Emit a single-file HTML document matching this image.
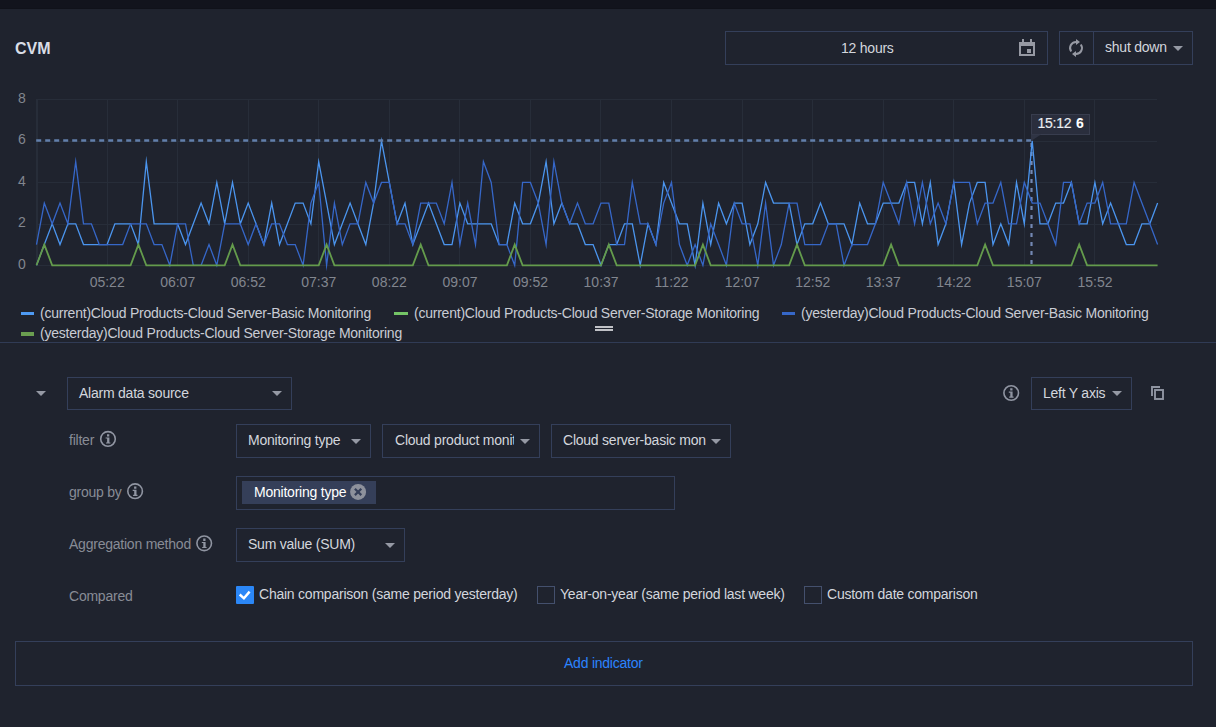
<!DOCTYPE html>
<html><head><meta charset="utf-8"><title>CVM</title>
<style>
*{box-sizing:border-box;margin:0;padding:0}
html,body{width:1216px;height:727px;overflow:hidden;background:#1f232e;font-family:"Liberation Sans",sans-serif;font-size:14px;color:#d3d6dd}
.abs{position:absolute}
#top{left:0;top:0;width:1216px;height:9px;background:#12141d}
#title{left:15px;top:40px;font-size:16px;font-weight:bold;line-height:18px;color:#d9dde6}
.box{position:absolute;border:1px solid #343f5a;background:transparent}
.txt{position:absolute;white-space:nowrap;line-height:16px;letter-spacing:-0.23px}
.yl{position:absolute;left:0;width:25.7px;text-align:right;font-size:14px;line-height:16px;color:#82868f}
.xl{position:absolute;top:274px;width:60px;text-align:center;font-size:14px;line-height:16px;color:#82868f}
.lg{position:absolute;white-space:nowrap;line-height:16px;color:#c9ccd4;font-size:14px;letter-spacing:-0.23px}
.lb{position:absolute;width:13px;height:3px}
.lab{position:absolute;white-space:nowrap;line-height:16px;color:#888c96;font-size:14px;letter-spacing:-0.23px}
.caret{position:absolute;width:0;height:0;border-left:5px solid transparent;border-right:5px solid transparent;border-top:5.5px solid #9599a4}
svg{position:absolute;left:0;top:0;overflow:visible}
</style></head><body>
<div id="top" class="abs"></div><div class="abs" style="left:0;top:8px;width:1216px;height:1px;background:#10121a"></div>
<div id="title" class="abs">CVM</div>

<!-- date box -->
<div class="box" style="left:725px;top:31px;width:323px;height:34px"></div>
<div class="txt" style="left:841px;top:40px">12 hours</div>
<svg width="1216" height="727" viewBox="0 0 1216 727">
 <!-- calendar icon -->
 <g fill="#9699a3">
  <path d="M1019 42h16v14h-16z M1021 46v8h12v-8z" fill-rule="evenodd"/>
  <rect x="1022" y="39" width="2" height="4"/><rect x="1030" y="39" width="2" height="4"/>
  <rect x="1027" y="49" width="4" height="4"/>
 </g>
 <!-- refresh icon -->
 <g fill="none" stroke="#9699a3" stroke-width="2">
  <path d="M1071.2 51.5a6 6 0 0 1 4.8-9.5"/>
  <path d="M1080.8 44.5a6 6 0 0 1 -4.8 9.5"/>
 </g>
 <path d="M1076 39l4 3-4 3z M1076 57l-4-3 4-3z" fill="#9699a3"/>
</svg>
<div class="box" style="left:1059px;top:31px;width:134px;height:34px"></div>
<div class="abs" style="left:1093px;top:31px;width:1px;height:34px;background:#343f5a"></div>
<div class="txt" style="left:1105px;top:39px">shut down</div>
<div class="caret" style="left:1173px;top:46px"></div>

<!-- chart -->
<svg width="1216" height="727" viewBox="0 0 1216 727">
 <g stroke="#272d39" stroke-width="1" shape-rendering="crispEdges"><line x1="36" x2="1157" y1="265.5" y2="265.5"/><line x1="36" x2="1157" y1="224.5" y2="224.5"/><line x1="36" x2="1157" y1="182.5" y2="182.5"/><line x1="36" x2="1157" y1="141.5" y2="141.5"/><line x1="36" x2="1157" y1="99.5" y2="99.5"/><line x1="36.5" x2="36.5" y1="99" y2="266"/><line x1="107.5" x2="107.5" y1="99" y2="266"/><line x1="177.5" x2="177.5" y1="99" y2="266"/><line x1="248.5" x2="248.5" y1="99" y2="266"/><line x1="318.5" x2="318.5" y1="99" y2="266"/><line x1="389.5" x2="389.5" y1="99" y2="266"/><line x1="459.5" x2="459.5" y1="99" y2="266"/><line x1="530.5" x2="530.5" y1="99" y2="266"/><line x1="600.5" x2="600.5" y1="99" y2="266"/><line x1="671.5" x2="671.5" y1="99" y2="266"/><line x1="742.5" x2="742.5" y1="99" y2="266"/><line x1="812.5" x2="812.5" y1="99" y2="266"/><line x1="883.5" x2="883.5" y1="99" y2="266"/><line x1="953.5" x2="953.5" y1="99" y2="266"/><line x1="1024.5" x2="1024.5" y1="99" y2="266"/><line x1="1094.5" x2="1094.5" y1="99" y2="266"/><line x1="37.5" x2="37.5" y1="99" y2="266"/></g>
 <line x1="1031.5" x2="1031.5" y1="143" y2="265" stroke="#7388b3" stroke-width="2.2" stroke-dasharray="4,5"/>
 <polyline fill="none" stroke="#4b95ee" stroke-width="1.3" stroke-linejoin="miter" stroke-miterlimit="10" points="36.5,265.3 44.3,244.6 52.2,223.8 60.0,244.6 67.9,223.8 75.7,223.8 83.5,244.6 91.4,244.6 99.2,244.6 107.1,244.6 114.9,223.8 122.7,223.8 130.6,223.8 138.4,244.6 146.3,161.7 154.1,223.8 161.9,223.8 169.8,223.8 177.6,223.8 185.5,244.6 193.3,223.8 201.1,203.1 209.0,223.8 216.8,182.4 224.7,223.8 232.5,182.4 240.3,223.8 248.2,203.1 256.0,223.8 263.9,244.6 271.7,203.1 279.5,244.6 287.4,223.8 295.2,203.1 303.1,203.1 310.9,223.8 318.7,161.7 326.6,203.1 334.4,244.6 342.3,223.8 350.1,203.1 357.9,223.8 365.8,244.6 373.6,203.1 381.5,140.9 389.3,182.4 397.1,223.8 405.0,203.1 412.8,244.6 420.7,223.8 428.5,203.1 436.3,223.8 444.2,244.6 452.0,244.6 459.9,203.1 467.7,223.8 475.5,223.8 483.4,223.8 491.2,223.8 499.1,244.6 506.9,244.6 514.7,203.1 522.6,223.8 530.4,223.8 538.3,203.1 546.1,161.7 553.9,223.8 561.8,203.1 569.6,223.8 577.5,223.8 585.3,244.6 593.1,244.6 601.0,265.3 608.8,244.6 616.7,244.6 624.5,223.8 632.3,223.8 640.2,265.3 648.0,223.8 655.9,244.6 663.7,182.4 671.5,203.1 679.4,223.8 687.2,223.8 695.1,265.3 702.9,203.1 710.7,244.6 718.6,203.1 726.4,223.8 734.3,203.1 742.1,203.1 749.9,244.6 757.8,223.8 765.6,182.4 773.5,203.1 781.3,203.1 789.1,203.1 797.0,244.6 804.8,223.8 812.7,223.8 820.5,203.1 828.3,223.8 836.2,223.8 844.0,223.8 851.9,244.6 859.7,203.1 867.5,223.8 875.4,223.8 883.2,203.1 891.1,203.1 898.9,203.1 906.7,182.4 914.6,182.4 922.4,223.8 930.3,182.4 938.1,244.6 945.9,223.8 953.8,182.4 961.6,244.6 969.5,203.1 977.3,182.4 985.1,182.4 993.0,244.6 1000.8,223.8 1008.7,244.6 1016.5,182.4 1024.3,223.8 1032.2,140.9 1040.0,223.8 1047.9,223.8 1055.7,203.1 1063.5,203.1 1071.4,182.4 1079.2,223.8 1087.1,223.8 1094.9,182.4 1102.7,223.8 1110.6,203.1 1118.4,223.8 1126.3,244.6 1134.1,244.6 1141.9,223.8 1149.8,223.8 1157.6,203.1"/>
 <polyline fill="none" stroke="#3667c8" stroke-width="1.3" stroke-linejoin="miter" stroke-miterlimit="10" points="36.5,244.6 44.3,203.1 52.2,223.8 60.0,203.1 67.9,223.8 75.7,161.7 83.5,223.8 91.4,223.8 99.2,244.6 107.1,244.6 114.9,244.6 122.7,244.6 130.6,223.8 138.4,223.8 146.3,223.8 154.1,244.6 161.9,244.6 169.8,265.3 177.6,223.8 185.5,223.8 193.3,265.3 201.1,265.3 209.0,244.6 216.8,265.3 224.7,223.8 232.5,223.8 240.3,223.8 248.2,244.6 256.0,223.8 263.9,244.6 271.7,223.8 279.5,223.8 287.4,244.6 295.2,244.6 303.1,265.3 310.9,203.1 318.7,182.4 326.6,265.3 334.4,203.1 342.3,244.6 350.1,223.8 357.9,223.8 365.8,182.4 373.6,203.1 381.5,182.4 389.3,182.4 397.1,223.8 405.0,223.8 412.8,244.6 420.7,203.1 428.5,203.1 436.3,203.1 444.2,223.8 452.0,182.4 459.9,244.6 467.7,203.1 475.5,244.6 483.4,161.7 491.2,182.4 499.1,244.6 506.9,244.6 514.7,265.3 522.6,182.4 530.4,182.4 538.3,203.1 546.1,244.6 553.9,161.7 561.8,203.1 569.6,223.8 577.5,203.1 585.3,223.8 593.1,223.8 601.0,203.1 608.8,203.1 616.7,244.6 624.5,244.6 632.3,182.4 640.2,223.8 648.0,223.8 655.9,244.6 663.7,203.1 671.5,182.4 679.4,244.6 687.2,265.3 695.1,244.6 702.9,265.3 710.7,223.8 718.6,244.6 726.4,265.3 734.3,203.1 742.1,223.8 749.9,223.8 757.8,265.3 765.6,203.1 773.5,265.3 781.3,244.6 789.1,203.1 797.0,203.1 804.8,244.6 812.7,244.6 820.5,244.6 828.3,223.8 836.2,223.8 844.0,265.3 851.9,244.6 859.7,244.6 867.5,244.6 875.4,223.8 883.2,182.4 891.1,203.1 898.9,223.8 906.7,182.4 914.6,223.8 922.4,182.4 930.3,223.8 938.1,203.1 945.9,223.8 953.8,182.4 961.6,182.4 969.5,182.4 977.3,223.8 985.1,203.1 993.0,203.1 1000.8,182.4 1008.7,223.8 1016.5,223.8 1024.3,182.4 1032.2,203.1 1040.0,203.1 1047.9,223.8 1055.7,244.6 1063.5,182.4 1071.4,182.4 1079.2,223.8 1087.1,203.1 1094.9,203.1 1102.7,182.4 1110.6,223.8 1118.4,223.8 1126.3,223.8 1134.1,182.4 1141.9,203.1 1149.8,223.8 1157.6,244.6"/>
 <polyline fill="none" stroke="#649b4c" stroke-width="1.8" stroke-linejoin="miter" stroke-miterlimit="10" points="36.5,265.3 44.3,244.6 52.2,265.3 60.0,265.3 67.9,265.3 75.7,265.3 83.5,265.3 91.4,265.3 99.2,265.3 107.1,265.3 114.9,265.3 122.7,265.3 130.6,265.3 138.4,244.6 146.3,265.3 154.1,265.3 161.9,265.3 169.8,265.3 177.6,265.3 185.5,265.3 193.3,265.3 201.1,265.3 209.0,265.3 216.8,265.3 224.7,265.3 232.5,244.6 240.3,265.3 248.2,265.3 256.0,265.3 263.9,265.3 271.7,265.3 279.5,265.3 287.4,265.3 295.2,265.3 303.1,265.3 310.9,265.3 318.7,265.3 326.6,244.6 334.4,265.3 342.3,265.3 350.1,265.3 357.9,265.3 365.8,265.3 373.6,265.3 381.5,265.3 389.3,265.3 397.1,265.3 405.0,265.3 412.8,265.3 420.7,244.6 428.5,265.3 436.3,265.3 444.2,265.3 452.0,265.3 459.9,265.3 467.7,265.3 475.5,265.3 483.4,265.3 491.2,265.3 499.1,265.3 506.9,265.3 514.7,244.6 522.6,265.3 530.4,265.3 538.3,265.3 546.1,265.3 553.9,265.3 561.8,265.3 569.6,265.3 577.5,265.3 585.3,265.3 593.1,265.3 601.0,265.3 608.8,244.6 616.7,265.3 624.5,265.3 632.3,265.3 640.2,265.3 648.0,265.3 655.9,265.3 663.7,265.3 671.5,265.3 679.4,265.3 687.2,265.3 695.1,265.3 702.9,244.6 710.7,265.3 718.6,265.3 726.4,265.3 734.3,265.3 742.1,265.3 749.9,265.3 757.8,265.3 765.6,265.3 773.5,265.3 781.3,265.3 789.1,265.3 797.0,244.6 804.8,265.3 812.7,265.3 820.5,265.3 828.3,265.3 836.2,265.3 844.0,265.3 851.9,265.3 859.7,265.3 867.5,265.3 875.4,265.3 883.2,265.3 891.1,244.6 898.9,265.3 906.7,265.3 914.6,265.3 922.4,265.3 930.3,265.3 938.1,265.3 945.9,265.3 953.8,265.3 961.6,265.3 969.5,265.3 977.3,265.3 985.1,244.6 993.0,265.3 1000.8,265.3 1008.7,265.3 1016.5,265.3 1024.3,265.3 1032.2,265.3 1040.0,265.3 1047.9,265.3 1055.7,265.3 1063.5,265.3 1071.4,265.3 1079.2,244.6 1087.1,265.3 1094.9,265.3 1102.7,265.3 1110.6,265.3 1118.4,265.3 1126.3,265.3 1134.1,265.3 1141.9,265.3 1149.8,265.3 1157.6,265.3"/>
 <line x1="36.2" x2="1031.5" y1="140.4" y2="140.4" stroke="#627fab" stroke-width="2.5" stroke-dasharray="5,4"/>
</svg>
<div class="yl" style="top:256px">0</div><div class="yl" style="top:214px">2</div><div class="yl" style="top:173px">4</div><div class="yl" style="top:131px">6</div><div class="yl" style="top:90px">8</div>
<div class="xl" style="left:77.2px">05:22</div><div class="xl" style="left:147.7px">06:07</div><div class="xl" style="left:218.3px">06:52</div><div class="xl" style="left:288.8px">07:37</div><div class="xl" style="left:359.4px">08:22</div><div class="xl" style="left:430.0px">09:07</div><div class="xl" style="left:500.5px">09:52</div><div class="xl" style="left:571.1px">10:37</div><div class="xl" style="left:641.6px">11:22</div><div class="xl" style="left:712.2px">12:07</div><div class="xl" style="left:782.8px">12:52</div><div class="xl" style="left:853.3px">13:37</div><div class="xl" style="left:923.9px">14:22</div><div class="xl" style="left:994.4px">15:07</div><div class="xl" style="left:1065.0px">15:52</div>
<!-- tooltip -->
<div class="abs" style="left:1031px;top:114px;width:59px;height:21px;background:#2a2e3d;border:1px solid #383d4e"></div>
<svg width="1216" height="727"><path d="M1031 134.5h10l-10 6.5z" fill="#2f3444"/></svg>
<div class="txt" style="left:1037.5px;top:114.5px;color:#eceef2;-webkit-text-stroke:0.15px #eceef2">15:12 <b style="color:#fff;margin-left:1px;-webkit-text-stroke:0">6</b></div>

<!-- legend -->
<div class="lb" style="left:21px;top:312px;background:#4e9af3"></div>
<div class="lg" style="left:40px;top:305px">(current)Cloud Products-Cloud Server-Basic Monitoring</div>
<div class="lb" style="left:394px;top:312px;width:14px;background:#74c466"></div>
<div class="lg" style="left:414px;top:305px">(current)Cloud Products-Cloud Server-Storage Monitoring</div>
<div class="lb" style="left:782px;top:312px;background:#3667c8"></div>
<div class="lg" style="left:801px;top:305px">(yesterday)Cloud Products-Cloud Server-Basic Monitoring</div>
<div class="lb" style="left:21px;top:332px;height:4px;background:#6a9e50"></div>
<div class="lg" style="left:40px;top:325px">(yesterday)Cloud Products-Cloud Server-Storage Monitoring</div>
<!-- drag handle -->
<div class="abs" style="left:595px;top:326px;width:18px;height:2px;background:#c0c1c6"></div>
<div class="abs" style="left:595px;top:329px;width:18px;height:2px;background:#c0c1c6"></div>
<div class="abs" style="left:0;top:342px;width:1216px;height:1px;background:#303b55"></div>

<!-- row 1 -->
<div class="caret" style="left:36px;top:391px"></div>
<div class="box" style="left:67px;top:377px;width:225px;height:33px"></div>
<div class="txt" style="left:79px;top:385px">Alarm data source</div>
<div class="caret" style="left:272px;top:391px"></div>
<div class="box" style="left:1031px;top:377px;width:101px;height:33px"></div>
<div class="txt" style="left:1043px;top:385px">Left Y axis</div>
<div class="caret" style="left:1112px;top:391px"></div>

<!-- filter -->
<div class="lab" style="left:69px;top:432px">filter</div>
<div class="box" style="left:236px;top:424px;width:135px;height:34px"></div>
<div class="txt" style="left:248px;top:432px">Monitoring type</div>
<div class="caret" style="left:351px;top:439px"></div>
<div class="box" style="left:382px;top:424px;width:158px;height:34px"></div>
<div class="txt" style="left:395px;top:432px;width:119px;overflow:hidden">Cloud product monitoring</div>
<div class="caret" style="left:520px;top:439px"></div>
<div class="box" style="left:551px;top:424px;width:180px;height:34px"></div>
<div class="txt" style="left:563px;top:432px;width:143px;overflow:hidden">Cloud server-basic monitoring</div>
<div class="caret" style="left:711px;top:439px"></div>

<!-- group by -->
<div class="lab" style="left:69px;top:484px">group by</div>
<div class="box" style="left:236px;top:476px;width:439px;height:34px"></div>
<div class="abs" style="left:242px;top:481px;width:134px;height:23px;background:#353f59"></div>
<div class="txt" style="left:254px;top:484px;color:#fff">Monitoring type</div>

<!-- aggregation -->
<div class="lab" style="left:69px;top:536px">Aggregation method</div>
<div class="box" style="left:236px;top:528px;width:169px;height:34px"></div>
<div class="txt" style="left:248px;top:536px">Sum value (SUM)</div>
<div class="caret" style="left:385px;top:543px"></div>

<!-- compared -->
<div class="lab" style="left:69px;top:588px">Compared</div>
<div class="abs" style="left:236px;top:586px;width:18px;height:18px;background:#2b87f7;border-radius:1px"></div>
<div class="txt" style="left:259px;top:586px">Chain comparison (same period yesterday)</div>
<div class="box" style="left:537px;top:586px;width:18px;height:18px;border-color:#44506d"></div>
<div class="txt" style="left:560px;top:586px">Year-on-year (same period last week)</div>
<div class="box" style="left:804px;top:586px;width:18px;height:18px;border-color:#44506d"></div>
<div class="txt" style="left:827px;top:586px">Custom date comparison</div>

<!-- add indicator -->
<div class="box" style="left:15px;top:641px;width:1178px;height:45px"></div>
<div class="txt" style="left:564px;top:655px;color:#2b84ff">Add indicator</div>

<!-- icons -->
<svg width="1216" height="727" viewBox="0 0 1216 727">
 <g transform="translate(108.0 438.9)"><circle r="7.3" fill="none" stroke="#9095a2" stroke-width="1.6"/><path fill="#9095a2" d="M-1-4.7h2.3v2.3h-2.3z M-2.4-1.4h3.8v5h1v1.1h-4.4v-1.1h1.1v-3.9h-1.5z"/></g>
 <g transform="translate(135.1 491.2)"><circle r="7.3" fill="none" stroke="#9095a2" stroke-width="1.6"/><path fill="#9095a2" d="M-1-4.7h2.3v2.3h-2.3z M-2.4-1.4h3.8v5h1v1.1h-4.4v-1.1h1.1v-3.9h-1.5z"/></g>
 <g transform="translate(204.2 543.3)"><circle r="7.3" fill="none" stroke="#9095a2" stroke-width="1.6"/><path fill="#9095a2" d="M-1-4.7h2.3v2.3h-2.3z M-2.4-1.4h3.8v5h1v1.1h-4.4v-1.1h1.1v-3.9h-1.5z"/></g>
 <g transform="translate(1011.2 393.0)"><circle r="7.3" fill="none" stroke="#9095a2" stroke-width="1.6"/><path fill="#9095a2" d="M-1-4.7h2.3v2.3h-2.3z M-2.4-1.4h3.8v5h1v1.1h-4.4v-1.1h1.1v-3.9h-1.5z"/></g>
 <!-- copy icon -->
 <g fill="none" stroke="#9095a2" stroke-width="1.9">
  <rect x="1155" y="390" width="8" height="9"/>
  <path d="M1152 396v-9h8"/>
 </g>
 <!-- tag close -->
 <circle cx="358.1" cy="491.9" r="8" fill="#8d919c"/>
 <path d="M354.9 488.7l6.4 6.4M361.3 488.7l-6.4 6.4" stroke="#353f59" stroke-width="2.2"/>
 <!-- check -->
 <path d="M239.7 594.5l4.2 3.8 5.7-6.7" fill="none" stroke="#fff" stroke-width="2.4"/>
</svg>
</body></html>
